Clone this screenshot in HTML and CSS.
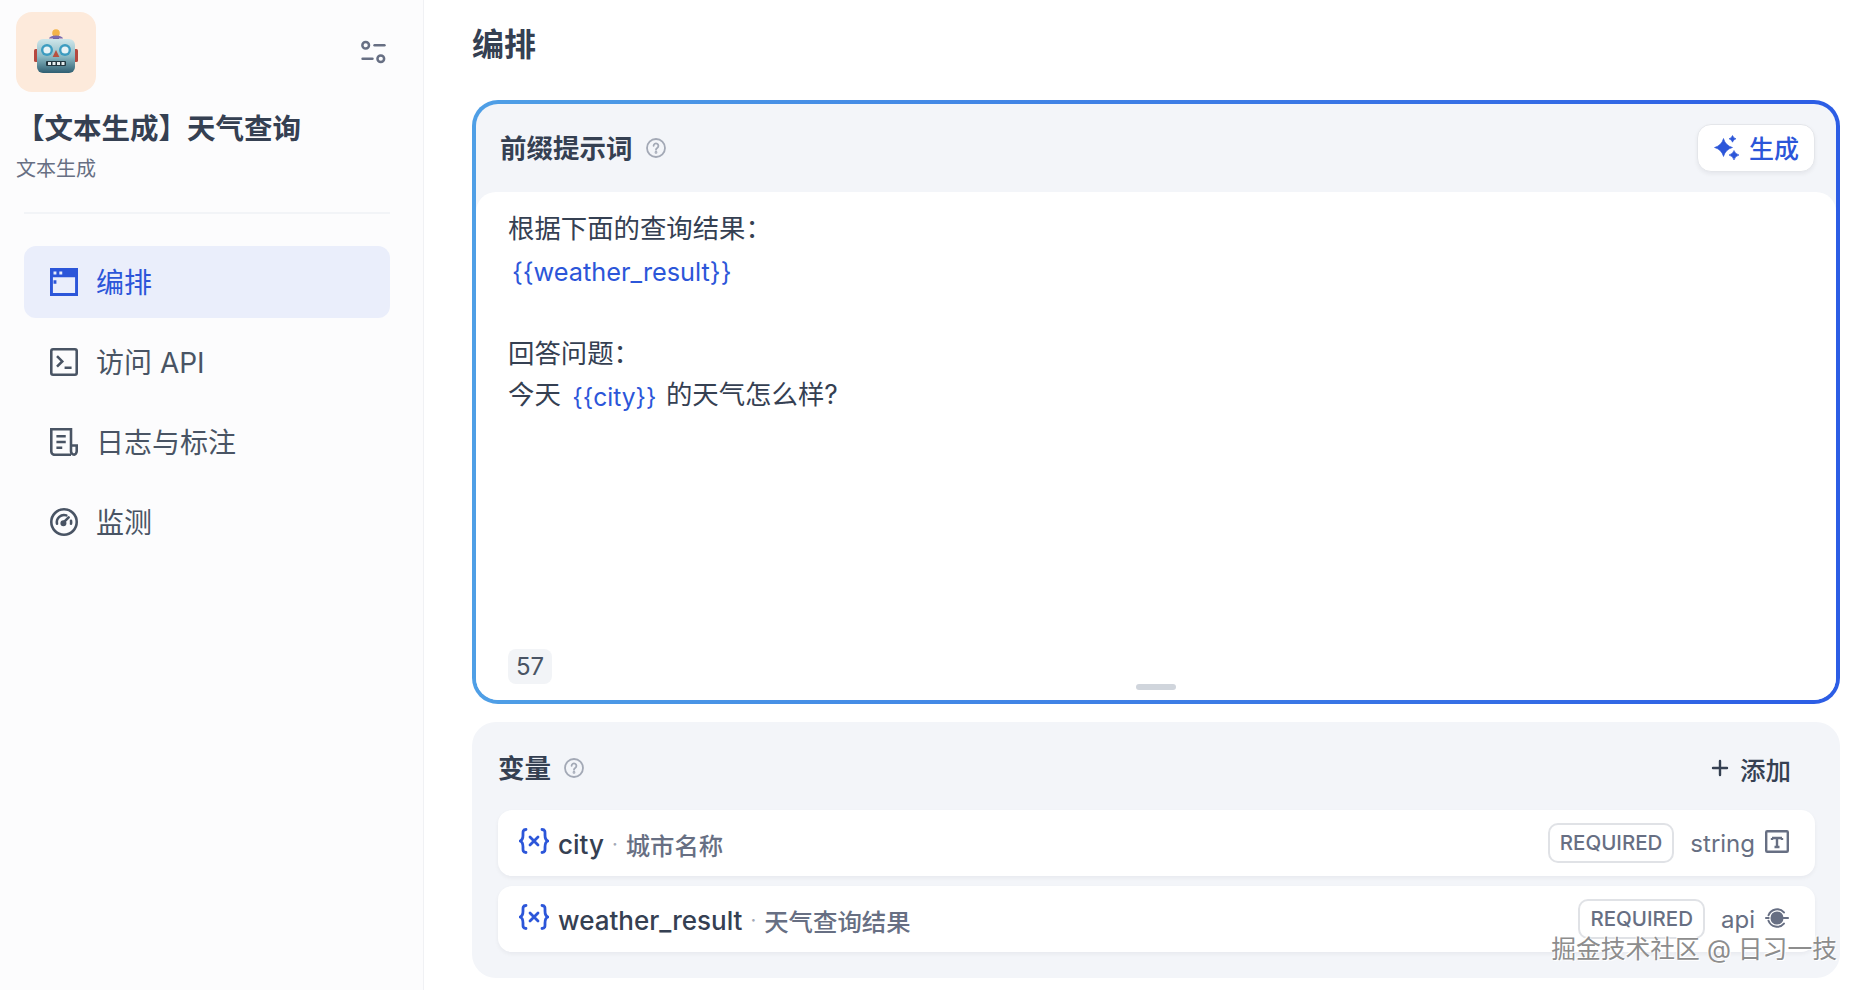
FILE: index.html
```html
<!DOCTYPE html>
<html lang="zh-CN">
<head>
    <meta charset="UTF-8">
    <meta name="viewport" content="width=device-width, initial-scale=1.0">
    <title>编排 | 天气查询</title>
    <link rel="stylesheet" href="styles.css">
</head>
<body>
    <aside class="sidebar">
        <div class="app-top">
            <div class="app-logo">
                <svg class="robot" viewBox="0 0 44 46">
                    <defs>
                        <linearGradient id="robotFace" x1="0" y1="0" x2="0" y2="1">
                            <stop offset="0" stop-color="#cfe6ea"/>
                            <stop offset="0.5" stop-color="#8fbcc6"/>
                            <stop offset="1" stop-color="#2f5f72"/>
                        </linearGradient>
                    </defs>
                    <rect x="19" y="6" width="6" height="6" fill="#6a5a9a"/>
                    <circle cx="22" cy="4" r="3.8" fill="#f4b44a"/>
                    <path d="M15 9.500 a7 3 0 0 1 14 0z" fill="#7b6bb0"/>
                    <rect x="0" y="20" width="5" height="13" rx="1.500" fill="#b5483f"/>
                    <rect x="39" y="20" width="5" height="13" rx="1.500" fill="#b5483f"/>
                    <rect x="3" y="10" width="38" height="34" rx="6" fill="url(#robotFace)"/>
                    <circle cx="13" cy="21" r="6" fill="#3d9cc0"/>
                    <circle cx="13" cy="21" r="3.600" fill="#e8f3f6"/>
                    <circle cx="31" cy="21" r="6" fill="#3d9cc0"/>
                    <circle cx="31" cy="21" r="3.600" fill="#e8f3f6"/>
                    <path d="M22 21 l3.400 7 h-6.800z" fill="#b8503f"/>
                    <rect x="12" y="32" width="20" height="5" rx="1" fill="#22363f"/>
                    <path d="M14 33h3v3h-3zM18.500 33h3v3h-3zM23 33h3v3h-3zM27.500 33h3v3h-3z" fill="#e8eef0"/>
                </svg>
            </div>
            <svg class="settings-icon" viewBox="0 0 24 24" fill="none" stroke="#676f83" stroke-width="2.400" stroke-linecap="round">
                <circle cx="4.500" cy="5" r="3.200"/>
                <path d="M13 5h9.500"/>
                <circle cx="19" cy="18" r="3.200"/>
                <path d="M1.500 18h9.500"/>
            </svg>
        </div>
        <div class="app-name">【文本生成】天气查询</div>
        <div class="app-type">文本生成</div>
        <div class="side-line"></div>
        <nav class="side-nav">
            <a class="nav-item active">
                <svg viewBox="0 0 24 24" fill="#2c56d9">
                    <path fill-rule="evenodd" d="M0 0h24v24H0zM2.500 8v13.500h19V8zM3 3v2.500h2.500V3zM8 3v2.500h2.500V3zM3 10.500h2.500v3H3z"/>
                </svg>
                <span>编排</span>
            </a>
            <a class="nav-item">
                <svg viewBox="0 0 24 24" fill="none" stroke="#495464" stroke-width="2.200">
                    <rect x="1.100" y="1.100" width="21.800" height="21.800" rx="1.500"/>
                    <path d="M6 7l4.500 4.500L6 16M12.500 17h6"/>
                </svg>
                <span>访问 API</span>
            </a>
            <a class="nav-item">
                <svg viewBox="0 0 24 24" fill="none" stroke="#495464" stroke-width="2.200">
                    <path d="M18 23H4a2.900 2.900 0 0 1-2.900-2.900V1.100H18V20a3 3 0 0 0 2 2.800M18 15h4.900v5a3 3 0 0 1-3 3"/>
                    <path d="M5.500 7h8M5.500 12h8M5.500 17h5"/>
                </svg>
                <span>日志与标注</span>
            </a>
            <a class="nav-item">
                <svg viewBox="0 0 24 24" fill="none" stroke="#495464" stroke-width="2.200" stroke-linecap="round">
                    <circle cx="12" cy="12" r="10.900"/>
                    <path d="M6 13.500a6.200 6.200 0 0 1 8-7.200M18 11a6.200 6.200 0 0 1 0 2.500M11 13l5-5"/>
                    <circle cx="11.500" cy="13" r="1.500" fill="#495464"/>
                </svg>
                <span>监测</span>
            </a>
        </nav>
    </aside>

    <main class="main">
        <h1 class="page-title">编排</h1>

        <section class="prompt-box">
            <div class="prompt-inner">
                <div class="prompt-head">
                    <div class="head-left">
                        <span class="head-title">前缀提示词</span>
                        <svg class="help-icon" viewBox="0 0 20 20" fill="none" stroke="#a3a9b6" stroke-width="1.800">
                            <circle cx="10" cy="10" r="9"/>
                            <path d="M7.600 7.800a2.400 2.400 0 1 1 3.800 2c-.9.6-1.400 1-1.400 2" stroke-linecap="round"/>
                            <circle cx="10" cy="14.400" r=".5"/>
                        </svg>
                    </div>
                    <button class="gen-button">
                        <svg viewBox="0 0 26 26" fill="#2c56d9" stroke="#2c56d9" stroke-width=".6" stroke-linejoin="round">
                            <path d="M9.500 3.500Q11.500 10.500 18.500 12.500 11.500 14.500 9.500 21.500 7.500 14.500 .5 12.500 7.500 10.500 9.500 3.500z"/>
                            <path d="M18.500 .5Q19.300 3 22 3.800 19.300 4.600 18.500 7.200 17.700 4.600 15 3.800 17.700 3 18.500 .5z"/>
                            <path d="M20 15.500Q21 18.800 25 20 21 21.200 20 25 19 21.200 15 20 19 18.800 20 15.500z"/>
                        </svg>
                        <span class="gen-label">生成</span>
                    </button>
                </div>
                <div class="prompt-body">
                    <div class="prompt-text">
                        <p class="line">根据下面的查询结果：</p>
                        <p class="line line-var"><span class="var-tag">{{weather_result}}</span></p>
                        <p class="line line-blank"></p>
                        <p class="line">回答问题：</p>
                        <p class="line">今天 <span class="var-tag var-tag-low">{{city}}</span> 的天气怎么样?</p>
                    </div>
                    <div class="word-count">57</div>
                    <div class="drag-handle"></div>
                </div>
            </div>
        </section>

        <section class="var-box">
            <div class="var-head">
                <div class="head-left">
                    <span class="head-title">变量</span>
                    <svg class="help-icon" viewBox="0 0 20 20" fill="none" stroke="#a3a9b6" stroke-width="1.800">
                        <circle cx="10" cy="10" r="9"/>
                        <path d="M7.600 7.800a2.400 2.400 0 1 1 3.800 2c-.9.6-1.400 1-1.400 2" stroke-linecap="round"/>
                        <circle cx="10" cy="14.400" r=".5"/>
                    </svg>
                </div>
                <div class="add-button">
                    <svg viewBox="0 0 18 18" fill="none" stroke="#354052" stroke-width="2.400" stroke-linecap="round">
                        <path d="M9 2v14M2 9h14"/>
                    </svg>
                    添加
                </div>
            </div>

            <div class="var-row">
                <div class="var-left">
                    <svg class="var-icon" viewBox="0 0 30 26" fill="none" stroke="#2c56d9" stroke-width="2.800" stroke-linecap="round">
                        <path d="M7 1.500C3.500 1.500 4 4 4 7c0 3-.5 5-2.800 6C3.500 14 4 16 4 19s-.5 5.500 3 5.500"/>
                        <path d="M23 1.500c3.500 0 3 2.500 3 5.500 0 3 .5 5 2.800 6-2.300 1-2.800 3-2.800 6s.5 5.500-3 5.500"/>
                        <path d="M11 9l8 8M19 9l-8 8"/>
                    </svg>
                    <span class="var-name">city</span>
                    <span class="var-dot">·</span>
                    <span class="var-desc">城市名称</span>
                </div>
                <div class="var-right">
                    <span class="required">REQUIRED</span>
                    <span class="var-type">string</span>
                    <svg class="type-icon" viewBox="0 0 24 24" fill="none" stroke="#676f83" stroke-width="2.400">
                        <rect x="1.200" y="1.200" width="21.600" height="20.600" rx="1"/>
                        <path d="M7 8h10M12 8v9M9.500 17h5M7 8v2M17 8v2"/>
                    </svg>
                </div>
            </div>

            <div class="var-row">
                <div class="var-left">
                    <svg class="var-icon" viewBox="0 0 30 26" fill="none" stroke="#2c56d9" stroke-width="2.800" stroke-linecap="round">
                        <path d="M7 1.500C3.500 1.500 4 4 4 7c0 3-.5 5-2.800 6C3.500 14 4 16 4 19s-.5 5.500 3 5.500"/>
                        <path d="M23 1.500c3.500 0 3 2.500 3 5.500 0 3 .5 5 2.800 6-2.300 1-2.800 3-2.800 6s.5 5.500-3 5.500"/>
                        <path d="M11 9l8 8M19 9l-8 8"/>
                    </svg>
                    <span class="var-name">weather_result</span>
                    <span class="var-dot">·</span>
                    <span class="var-desc">天气查询结果</span>
                </div>
                <div class="var-right">
                    <span class="required">REQUIRED</span>
                    <span class="var-type">api</span>
                    <svg class="type-icon" viewBox="0 0 26 24" fill="none" stroke="#676f83" stroke-width="2.200" stroke-linecap="round">
                        <circle cx="13" cy="12" r="6" fill="#676f83"/>
                        <path d="M20.500 6A9.800 9.800 0 0 0 3.800 9M3.800 15A9.800 9.800 0 0 0 20.500 18M1 12h3M18 12h7"/>
                    </svg>
                </div>
            </div>
        </section>
    </main>

    <div class="watermark">掘金技术社区 @ 日习一技</div>
</body>
</html>
```

FILE: styles.css
```css
* {
    box-sizing: border-box;
}

html, body {
    height: 100%;
}

body {
    margin: 0;
    display: flex;
    height: 990px;
    overflow: hidden;
    position: relative;
    background-color: white;
    color: #354052;
    font-family: Inter, "Noto Sans CJK SC", sans-serif;
}

.sidebar {
    width: 424px;
    flex-shrink: 0;
    padding: 12px 0 0 16px;
    background-color: #fcfcfd;
    border-right: 1px solid #f0f1f4;
}

.app-top {
    display: flex;
    justify-content: space-between;
    align-items: center;
    padding-right: 37px;
}

.app-logo {
    width: 80px;
    height: 80px;
    display: flex;
    align-items: center;
    justify-content: center;
    background-color: #fdeadb;
    border-radius: 16px;
}

.robot {
    width: 44px;
    height: 46px;
}

.settings-icon {
    width: 25px;
    height: 25px;
}

.app-name {
    margin-top: 17px;
    font-size: 28.5px;
    line-height: 40px;
    font-weight: 700;
}

.app-type {
    margin-top: 6px;
    font-size: 20px;
    line-height: 28px;
    color: #676f83;
}

.side-line {
    width: 366px;
    height: 2px;
    margin: 29px 0 32px 8px;
    background-color: #f2f4f7;
}

.side-nav {
    display: flex;
    flex-direction: column;
    gap: 8px;
    width: 366px;
    margin-left: 8px;
}

.nav-item {
    display: flex;
    align-items: center;
    gap: 18px;
    height: 72px;
    padding-left: 26px;
    border-radius: 12px;
    font-size: 28px;
    color: #495464;
}

.nav-item svg {
    width: 28px;
    height: 28px;
    flex-shrink: 0;
}

.nav-item span {
    padding-bottom: 2px;
}

.nav-item.active {
    background-color: #eaeefb;
    color: #2c56d9;
}

.main {
    flex: 1;
    padding: 0 24px 0 48px;
}

.page-title {
    margin: 0;
    height: 100px;
    padding-top: 25px;
    font-size: 32px;
    line-height: 40px;
    font-weight: 700;
}

.prompt-box {
    height: 604px;
    padding: 4px;
    border-radius: 26px;
    background: linear-gradient(90deg, #4f9fe6 0%, #2c5de5 100%);
}

.prompt-inner {
    height: 100%;
    display: flex;
    flex-direction: column;
    border-radius: 22px;
    overflow: hidden;
    background-color: #f3f5f9;
}

.prompt-head {
    height: 88px;
    flex-shrink: 0;
    display: flex;
    justify-content: space-between;
    align-items: center;
    padding: 0 21px 0 24px;
}

.head-left {
    display: flex;
    align-items: center;
    gap: 13px;
}

.head-title {
    font-size: 26.5px;
    line-height: 36px;
    font-weight: 700;
}

.help-icon {
    width: 20px;
    height: 20px;
}

.gen-button {
    display: flex;
    align-items: center;
    gap: 9px;
    width: 118px;
    height: 48px;
    padding: 0 0 0 16px;
    background-color: white;
    border: 1px solid #e4e6ea;
    border-radius: 14px;
    box-shadow: 0 2px 4px rgba(16, 24, 40, 0.06);
    color: #2c56d9;
    font-family: inherit;
    font-size: 25px;
    font-weight: 500;
}

.gen-button svg {
    width: 26px;
    height: 26px;
}

.gen-label {
    padding-bottom: 3px;
}

.prompt-body {
    flex: 1;
    position: relative;
    display: flex;
    flex-direction: column;
    justify-content: space-between;
    padding: 16px 32px 16px;
    background-color: white;
    border-radius: 20px 20px 0 0;
}

.prompt-text {
    font-size: 26.4px;
    color: #354052;
}

.line {
    margin: 0;
    height: 41px;
    line-height: 41px;
    white-space: pre;
}

.line-var {
    height: 47px;
    padding-top: 2px;
}

.line-blank {
    height: 37px;
}

.var-tag {
    color: #2c56d9;
    padding: 0 4px;
    font-size: 25.3px;
}

.var-tag-low {
    position: relative;
    top: 2px;
    padding-right: 2px;
    font-size: 24.6px;
}

.word-count {
    width: 44px;
    height: 35px;
    line-height: 35px;
    text-align: center;
    font-size: 24px;
    color: #495464;
    background-color: #f2f4f7;
    border-radius: 8px;
}

.drag-handle {
    position: absolute;
    left: 50%;
    bottom: 10px;
    width: 40px;
    height: 6px;
    margin-left: -20px;
    border-radius: 3px;
    background-color: #d0d5dc;
}

.var-box {
    height: 256px;
    margin-top: 18px;
    padding: 0 25px 0 26px;
    background-color: #f3f5f9;
    border-radius: 24px;
}

.var-head {
    height: 88px;
    display: flex;
    justify-content: space-between;
    align-items: center;
    padding: 4px 24px 0 0;
}

.add-button {
    display: flex;
    align-items: center;
    gap: 11px;
    font-size: 25.5px;
    font-weight: 500;
}

.add-button svg {
    width: 18px;
    height: 18px;
}

.var-row {
    height: 66px;
    margin-bottom: 10px;
    display: flex;
    justify-content: space-between;
    align-items: center;
    padding: 0 26px 0 21px;
    background-color: white;
    border-radius: 14px;
    box-shadow: 0 2px 4px rgba(16, 24, 40, 0.05);
}

.var-left,
.var-right {
    display: flex;
    align-items: center;
}

.var-left {
    padding-top: 2px;
}

.var-icon {
    width: 30px;
    height: 26px;
    margin: -6px 9px 0 0;
}

.var-name {
    font-size: 26px;
    font-weight: 500;
}

.var-dot {
    margin: 0 8px;
    font-size: 20px;
    color: #a3a9b6;
}

.var-desc {
    font-size: 24.4px;
    font-weight: 500;
    color: #676f83;
}

.required {
    height: 40px;
    line-height: 36px;
    padding: 0 10px;
    margin-right: 16px;
    font-size: 20.5px;
    font-weight: 500;
    color: #676f83;
    border: 2px solid #e0e2e6;
    border-radius: 10px;
    background-color: white;
}

.var-type {
    margin: 0 10px 0 0;
    font-size: 24px;
    color: #676f83;
}

.type-icon {
    width: 24px;
    height: 24px;
    margin-top: -2px;
}

.watermark {
    position: absolute;
    right: 27px;
    bottom: 26px;
    font-size: 24.8px;
    line-height: 30px;
    color: #8d8d8d;
    text-shadow: 1px 1px 0 white, -1px -1px 0 #fff;
}
```
